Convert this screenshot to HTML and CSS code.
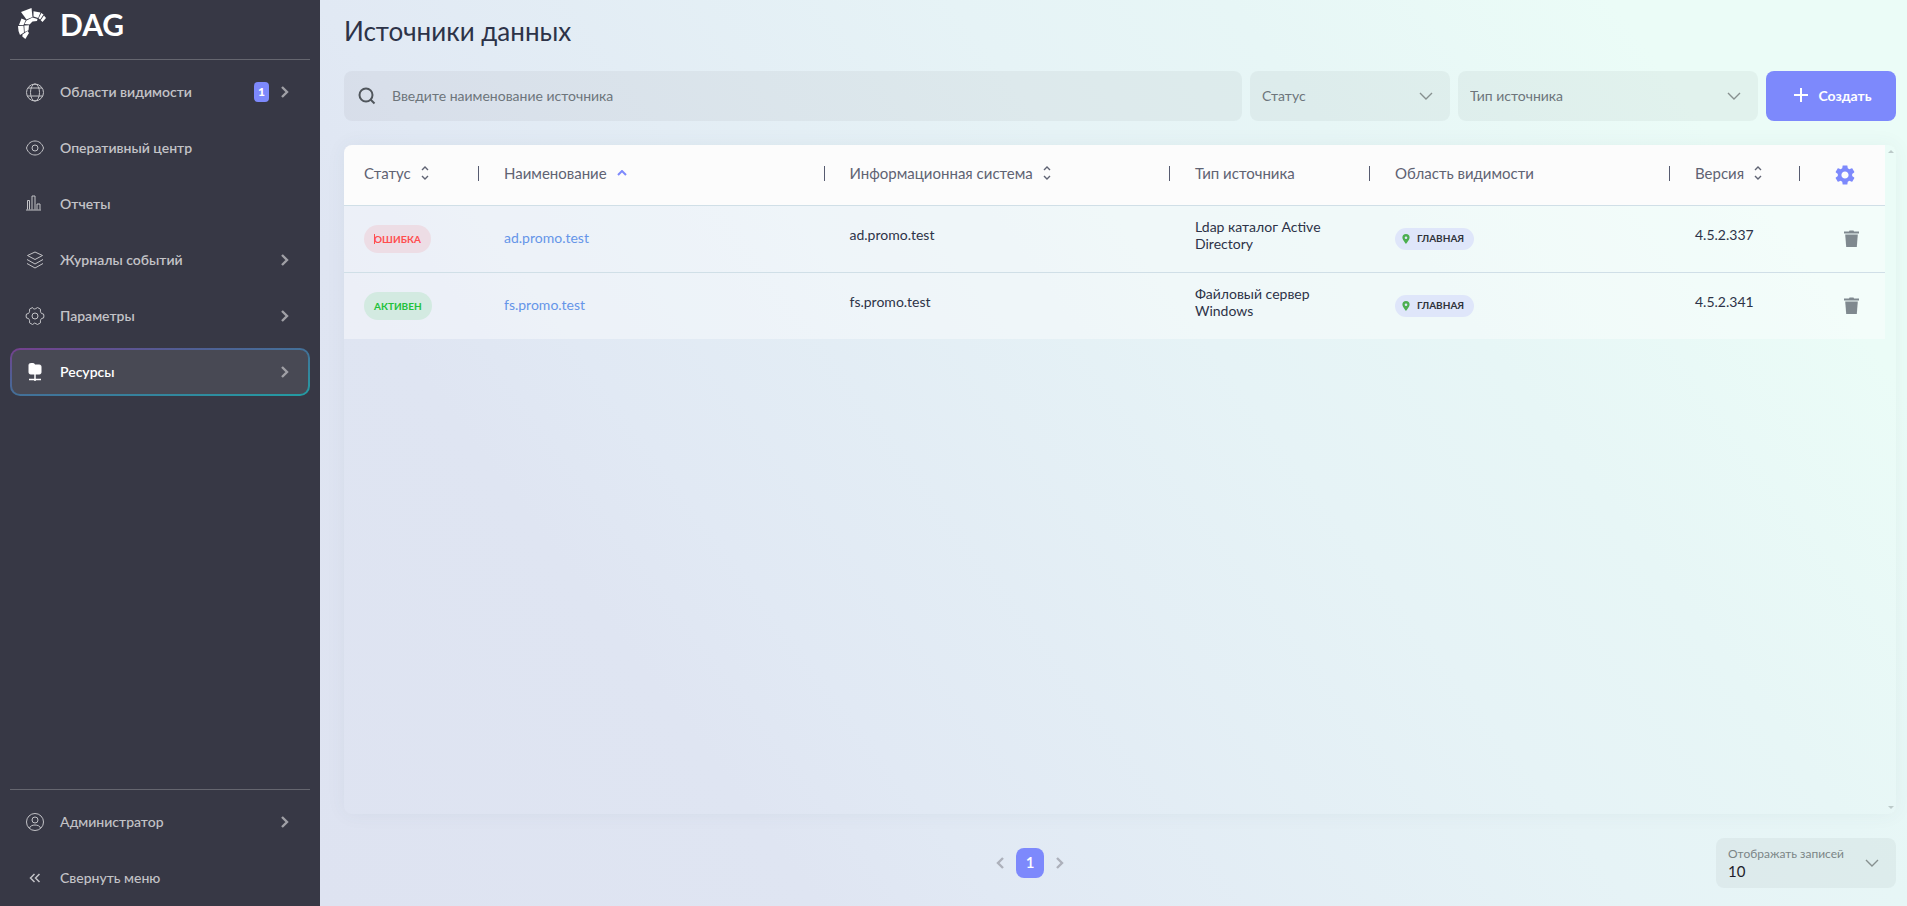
FILE: index.html
```
<!DOCTYPE html>
<html lang="ru">
<head>
    <meta charset="UTF-8">
    <meta name="viewport" content="width=device-width, initial-scale=1.0">
    <title>DAG - Источники данных</title>
    <link rel="stylesheet" href="styles.css">
</head>
<body>

    <!-- Общие иконки -->
    <svg class="sprite" aria-hidden="true">
        <symbol id="chevron" viewBox="0 0 8 12"><path d="M1 1l5 5-5 5" fill="none" stroke="currentColor" stroke-width="2.4"/></symbol>
        <symbol id="arrow-down" viewBox="0 0 14 8"><path d="M1 1l6 6 6-6" fill="none" stroke="currentColor" stroke-width="1.4"/></symbol>
        <symbol id="sort" viewBox="0 0 8 14"><path d="M1 4l3-3 3 3M1 10l3 3 3-3" fill="none" stroke="currentColor" stroke-width="1.4"/></symbol>
        <symbol id="pin" viewBox="0 0 8 10"><path fill-rule="evenodd" d="M4 0a3.6 3.6 0 0 0-3.6 3.6C.4 6 4 10 4 10s3.6-4 3.6-6.4A3.6 3.6 0 0 0 4 0zm0 5a1.3 1.3 0 1 1 0-2.6A1.3 1.3 0 0 1 4 5z"/></symbol>
        <symbol id="trash" viewBox="0 0 15 18"><path d="M0 1.5h5L5.5.5h4l.5 1h5v2H0z"/><path d="M1.2 4.5h12.600l-1 12.500H2.200z"/></symbol>
    </svg>

    <div class="layout">
        <aside class="sidebar">
            <div class="logo">
                <svg width="28" height="32" viewBox="0 0 28 32" fill="#fff">
                    <path d="M3 4L13.500 0l1 9-6 2.500z"/>
                    <path d="M15.500 3.200l7 1.300-2.300 5.500-4.700-1.500z"/>
                    <path d="M23.300 5l2.200 1.500-3.300 5-1.600-.9z"/>
                    <path d="M26 7.500l2 2.500-3.500 4-1.800-1.800z"/>
                    <path d="M3.500 10.500l4.200 1.800L5.500 17H1z"/>
                    <path d="M8.500 12.500l6-3 5 1.500-.5 2-4.500.5-3 3-5-.5z"/>
                    <path d="M0 18l5.500-.2.500 6.700-4 2.500Q0 23 0 18z"/>
                    <path d="M6.300 17.500l4.700-.2-.5 5-3.800 1.700z"/>
                    <path d="M4.500 26.500l5-3.500 1.500 2-3.700 6-3-2.500z"/>
                </svg>
                <span>DAG</span>
            </div>
            <nav class="menu">
                <a href="#" class="menu-item">
                    <svg width="20" height="20" viewBox="0 0 20 20"><circle cx="10" cy="10.500" r="8.500"/><ellipse cx="10" cy="10.500" rx="4.500" ry="8.500"/><path d="M3 6h14M2 14h16"/></svg>
                    <span>Области видимости</span>
                    <b class="badge">1</b>
                    <svg class="chevron"><use href="#chevron"/></svg>
                </a>
                <a href="#" class="menu-item">
                    <svg width="20" height="20" viewBox="0 0 20 20"><path d="M1.500 10C3 5 6.500 3 10 3s7 2 8.500 7c-1.500 5-5 7-8.500 7s-7-2-8.500-7z"/><circle cx="10" cy="10" r="3"/></svg>
                    <span>Оперативный центр</span>
                </a>
                <a href="#" class="menu-item">
                    <svg width="20" height="20" viewBox="0 0 20 20"><path d="M1 16h15M2.500 15.500V6.500h2v9M7 15.500V2h3v13.500M12 15.500V10h3v5.500"/></svg>
                    <span>Отчеты</span>
                </a>
                <a href="#" class="menu-item">
                    <svg width="20" height="20" viewBox="0 0 20 20"><path d="M10 2l7.500 3.500L10 9.500 2.500 5.500zM2 9.500l8 4.500 8-4.500M2 13.500l8 4.500 8-4.500"/></svg>
                    <span>Журналы событий</span>
                    <svg class="chevron"><use href="#chevron"/></svg>
                </a>
                <a href="#" class="menu-item">
                    <svg width="20" height="20" viewBox="0 0 20 20"><path d="M7.500 1.500q1.200 3 5 0l3 1.700q-.8 4.600 3 4.800.9 2 0 4-3.800.2-3 4.800l-3 1.700q-3-3-5 0l-3-1.700q.8-4.600-3-4.800-.9-2 0-4 3.800-.2 3-4.800z"/><circle cx="10" cy="10" r="3"/></svg>
                    <span>Параметры</span>
                    <svg class="chevron"><use href="#chevron"/></svg>
                </a>
                <a href="#" class="menu-item active">
                    <svg width="20" height="20" viewBox="0 0 20 20"><path class="fill" d="M4 3q0-1.500 1.500-1.500h3L10.500 3h4Q16 3 16 4.500v6q0 1.500-1.500 1.500h-9Q4 12 4 10.500z"/><path d="M10 12v7M4 17.500h12" stroke-width="1.500"/></svg>
                    <span>Ресурсы</span>
                    <svg class="chevron"><use href="#chevron"/></svg>
                </a>
            </nav>
            <nav class="menu menu-bottom">
                <a href="#" class="menu-item">
                    <svg width="20" height="20" viewBox="0 0 20 20"><circle cx="10" cy="10" r="8.500"/><circle cx="10" cy="8" r="3"/><path d="M4.500 16c1-4 10-4 11 0"/></svg>
                    <span>Администратор</span>
                    <svg class="chevron"><use href="#chevron"/></svg>
                </a>
                <button type="button" class="menu-item">
                    <svg width="20" height="20" viewBox="0 0 20 20"><path d="M9.500 6l-4 4 4 4M14.500 6l-4 4 4 4" stroke-width="1.500"/></svg>
                    <span>Свернуть меню</span>
                </button>
            </nav>
        </aside>

        <main class="content">
            <h1>Источники данных</h1>

            <form class="filters">
                <div class="search">
                    <svg width="18" height="18" viewBox="0 0 18 18" fill="none" stroke="#50565c" stroke-width="2"><circle cx="8" cy="8" r="6.500"/><path d="M12.500 12.500l4 4"/></svg>
                    <input type="text" aria-label="Поиск" placeholder="Введите наименование источника">
                </div>
                <div class="select select-status">
                    <select aria-label="Статус"><option>Статус</option></select>
                    <svg><use href="#arrow-down"/></svg>
                </div>
                <div class="select select-type">
                    <select aria-label="Тип источника"><option>Тип источника</option></select>
                    <svg><use href="#arrow-down"/></svg>
                </div>
                <button type="button" class="create">
                    <svg width="14" height="14" viewBox="0 0 14 14" stroke="#fff" stroke-width="2"><path d="M7 0v14M0 7h14"/></svg>
                    Создать
                </button>
            </form>

            <div class="table-box">
                <table>
                    <colgroup>
                        <col class="col-status">
                        <col>
                        <col>
                        <col class="col-type">
                        <col class="col-scope">
                        <col class="col-version">
                        <col class="col-actions">
                    </colgroup>
                    <thead>
                        <tr>
                            <th><div>Статус <svg class="sort"><use href="#sort"/></svg></div></th>
                            <th><div>Наименование <svg class="sort-asc" viewBox="0 0 10 6"><path d="M1 5l4-4 4 4"/></svg></div></th>
                            <th><div>Информационная система <svg class="sort"><use href="#sort"/></svg></div></th>
                            <th><div>Тип источника</div></th>
                            <th><div>Область видимости</div></th>
                            <th><div>Версия <svg class="sort"><use href="#sort"/></svg></div></th>
                            <th class="actions">
                                <button type="button" aria-label="Настройки">
                                    <svg width="24" height="24" viewBox="0 0 24 24" fill="#7d89fc"><path d="M19.140 12.940c.04-.3.060-.61.060-.94 0-.32-.02-.64-.07-.94l2.030-1.580c.18-.14.23-.41.12-.61l-1.920-3.320c-.12-.22-.37-.29-.59-.22l-2.390.96c-.5-.38-1.030-.7-1.620-.94l-.36-2.540c-.04-.24-.24-.41-.48-.41h-3.840c-.24 0-.43.17-.47.41l-.36 2.540c-.59.24-1.130.57-1.620.94l-2.390-.96c-.22-.08-.47 0-.59.22L2.740 8.870c-.12.21-.08.47.12.61l2.030 1.580c-.05.3-.09.63-.09.94s.02.64.07.94l-2.030 1.580c-.18.14-.23.41-.12.61l1.920 3.320c.12.22.37.29.59.22l2.390-.96c.5.38 1.030.7 1.620.94l.36 2.540c.05.24.24.41.48.41h3.840c.24 0 .44-.17.47-.41l.36-2.540c.59-.24 1.130-.56 1.620-.94l2.390.96c.22.08.47 0 .59-.22l1.920-3.320c.12-.22.070-.47-.12-.61l-2.010-1.580zM12 15.600c-1.980 0-3.600-1.620-3.600-3.600s1.620-3.600 3.600-3.600 3.600 1.620 3.600 3.600-1.620 3.600-3.600 3.600z"/></svg>
                                </button>
                            </th>
                        </tr>
                    </thead>
                    <tbody>
                        <tr>
                            <td><span class="status error">ОШИБКА</span></td>
                            <td><a href="#">ad.promo.test</a></td>
                            <td><p>ad.promo.test</p></td>
                            <td><p>Ldap каталог Active Directory</p></td>
                            <td><span class="scope"><svg><use href="#pin"/></svg>ГЛАВНАЯ</span></td>
                            <td><p>4.5.2.337</p></td>
                            <td class="actions"><button type="button" class="delete" aria-label="Удалить"><svg><use href="#trash"/></svg></button></td>
                        </tr>
                        <tr>
                            <td><span class="status ok">АКТИВЕН</span></td>
                            <td><a href="#">fs.promo.test</a></td>
                            <td><p>fs.promo.test</p></td>
                            <td><p>Файловый сервер Windows</p></td>
                            <td><span class="scope"><svg><use href="#pin"/></svg>ГЛАВНАЯ</span></td>
                            <td><p>4.5.2.341</p></td>
                            <td class="actions"><button type="button" class="delete" aria-label="Удалить"><svg><use href="#trash"/></svg></button></td>
                        </tr>
                    </tbody>
                </table>
                <div class="scrollbar"><i class="up"></i><i class="down"></i></div>
            </div>

            <footer class="footer">
                <nav class="pages">
                    <button type="button" aria-label="Назад"><svg class="chevron back"><use href="#chevron"/></svg></button>
                    <button type="button" class="current">1</button>
                    <button type="button" aria-label="Вперед"><svg class="chevron"><use href="#chevron"/></svg></button>
                </nav>
                <div class="select per-page">
                    <label for="perPage">Отображать записей</label>
                    <select id="perPage"><option>10</option></select>
                    <svg><use href="#arrow-down"/></svg>
                </div>
            </footer>
        </main>
    </div>

</body>
</html>
```

FILE: styles.css
```
* {
    box-sizing: border-box;
}

body {
    margin: 0;
    font-family: Lato, "Open Sans", sans-serif;
    font-size: 14px;
    color: #2d3348;
}

button, input, select {
    font-family: inherit;
    border: none;
    background: none;
    padding: 0;
    margin: 0;
}

button {
    cursor: pointer;
}

.sprite {
    display: none;
}

.layout {
    display: flex;
    min-height: 100vh;
}

/* Боковое меню */
.sidebar {
    width: 320px;
    flex-shrink: 0;
    padding: 0 10px 4px;
    background-color: #373845;
    display: flex;
    flex-direction: column;
}

.logo {
    height: 60px;
    padding: 0 8px 12px;
    display: flex;
    align-items: center;
    gap: 14px;
    border-bottom: 1px solid #65666f;
    color: #fff;
    font-size: 30px;
    font-weight: 700;
}

.menu {
    display: flex;
    flex-direction: column;
    gap: 8px;
    padding-top: 8px;
}

.menu-bottom {
    margin-top: auto;
    border-top: 1px solid #65666f;
}

.menu-item {
    height: 48px;
    padding: 0 21px 0 15px;
    display: flex;
    align-items: center;
    border-radius: 10px;
    color: #c3c3c7;
    font-size: 14px;
    font-weight: 600;
    text-align: left;
    text-decoration: none;
}

.menu-bottom .menu-item {
    font-weight: 500;
}

.menu-item span {
    flex: 1;
    margin-left: 15px;
    padding-bottom: 2px;
}

.menu-item svg {
    fill: none;
    stroke: currentColor;
}

.menu-item .fill {
    fill: #fff;
}

.menu-item.active {
    color: #fff;
    border: 2px solid transparent;
    padding: 0 19px 0 13px;
    background: linear-gradient(#484954, #484954) padding-box,
                linear-gradient(to bottom right, #763f8e, #515e94 30%, #229da3) border-box;
}

.badge {
    width: 15px;
    height: 20px;
    margin-right: 12px;
    border-radius: 4px;
    background-color: #7d89fc;
    color: #fff;
    font-size: 12px;
    line-height: 20px;
    text-align: center;
}

.chevron {
    width: 8px;
    height: 12px;
    color: #a0a0a6;
}

.menu-item .chevron {
    stroke: none;
}

/* Основная часть */
.content {
    flex: 1;
    min-width: 0;
    padding: 0 11px 18px 24px;
    display: flex;
    flex-direction: column;
    background: linear-gradient(53deg, #dee3f1 0%, #dfe5f2 22%, #e1e9f4 30%, #e6f3f6 58%, #e7f6f6 70%, #ebfcf7 87%);
}

h1 {
    margin: 0;
    height: 71px;
    padding-top: 14px;
    font-size: 26px;
    line-height: 34px;
    font-weight: 400;
}

.filters {
    display: flex;
    gap: 8px;
}

.search, .select {
    height: 50px;
    border-radius: 8px;
    background-color: rgba(0, 0, 0, 0.04);
    display: flex;
    align-items: center;
}

.search {
    flex: 1;
    padding-left: 14px;
    gap: 16px;
}

.search input {
    flex: 1;
    height: 50px;
    padding-bottom: 2px;
    font-size: 14px;
}

.search input::placeholder {
    color: #6d757b;
}

.select {
    position: relative;
}

.select select {
    appearance: none;
    width: 100%;
    height: 50px;
    padding: 0 40px 2px 12px;
    color: #6d757b;
    font-size: 14px;
}

.select svg {
    position: absolute;
    right: 17px;
    top: 21px;
    width: 14px;
    height: 8px;
    color: #87908f;
    pointer-events: none;
}

.select-status {
    width: 200px;
}

.select-type {
    width: 300px;
}

.create {
    width: 130px;
    height: 50px;
    padding: 0 0 2px 4px;
    border-radius: 8px;
    background-color: #7d89fc;
    color: #fff;
    font-size: 14px;
    font-weight: 700;
    display: flex;
    align-items: center;
    justify-content: center;
    gap: 10px;
}

/* Таблица */
.table-box {
    flex: 1;
    margin-top: 24px;
    display: flex;
    align-items: flex-start;
    border-radius: 8px;
    overflow: hidden;
    box-shadow: 0 0 20px rgba(60, 80, 110, 0.06);
}

table {
    flex: 1;
    border-collapse: collapse;
    table-layout: fixed;
    width: 100%;
}

.col-status {
    width: 140px;
}

.col-type {
    width: 200px;
}

.col-scope {
    width: 300px;
}

.col-version {
    width: 130px;
}

.col-actions {
    width: 80px;
}

th {
    height: 60px;
    padding: 0 5px 3px 20px;
    background-color: #fcfcfc;
    color: #5f6373;
    font-size: 15px;
    font-weight: 400;
    text-align: left;
}

th div {
    height: 15px;
    display: flex;
    align-items: center;
    gap: 10px;
    border-right: 1px solid #565b70;
}

.sort {
    width: 8px;
    height: 14px;
}

.sort-asc {
    width: 10px;
    height: 6px;
    fill: none;
    stroke: #7d89fc;
    stroke-width: 2;
}

td {
    height: 67px;
    padding: 0 20px;
    border-top: 1px solid #d0dfe7;
    background-color: rgba(255, 255, 255, 0.4);
    font-size: 14px;
    line-height: 17px;
}

td p {
    margin: 0 0 8px;
}

td a {
    display: block;
    margin-bottom: 2px;
    color: #6595e8;
    text-decoration: none;
}

.status {
    position: relative;
    display: inline-block;
    height: 28px;
    padding: 0 10px;
    border-radius: 14px;
    font-size: 10px;
    line-height: 28px;
    font-weight: 700;
}

.error {
    background-color: #eddde5;
    color: #ff4d4f;
}

.error::before {
    content: "";
    position: absolute;
    left: 10px;
    top: 9px;
    width: 1px;
    height: 10px;
    background-color: #ff4d4f;
}

.ok {
    background-color: #d3eae1;
    color: #22c13a;
}

.scope {
    display: inline-flex;
    align-items: center;
    height: 22px;
    padding: 0 10px 0 7px;
    gap: 7px;
    border-radius: 11px;
    background-color: #dfe6fa;
    color: #30333b;
    font-size: 10px;
    font-weight: 700;
}

.scope svg {
    width: 8px;
    height: 10px;
    fill: #4caf50;
}

.actions {
    padding: 0;
    text-align: center;
}

.actions button {
    display: block;
    margin: 4px auto 0;
}

.actions .delete {
    margin: 0 0 0 39px;
}

.delete svg {
    display: block;
    width: 15px;
    height: 18px;
    fill: #7f898f;
}

.scrollbar {
    width: 11px;
    align-self: stretch;
    padding: 5px 3px;
    display: flex;
    flex-direction: column;
    justify-content: space-between;
}

.scrollbar i {
    border: 3px solid transparent;
}

.scrollbar .up {
    border-top: none;
    border-bottom-color: #bccac9;
}

.scrollbar .down {
    border-bottom: none;
    border-top-color: #bccac9;
}

/* Нижняя панель */
.footer {
    display: flex;
    align-items: center;
    margin-top: 24px;
}

.pages {
    flex: 1;
    display: flex;
    align-items: center;
    justify-content: center;
    gap: 12px;
}

.pages .chevron {
    display: block;
    color: #adb1bb;
}

.back {
    transform: rotate(180deg);
}

.current {
    width: 28px;
    height: 30px;
    padding-bottom: 2px;
    border-radius: 8px;
    background-color: #7d89fc;
    color: #fff;
    font-size: 15px;
    font-weight: 600;
}

.per-page {
    width: 180px;
    flex-direction: column;
    align-items: flex-start;
    padding: 9px 12px 0;
}

.per-page label {
    color: #7b8586;
    font-size: 12px;
    line-height: 14px;
}

.per-page select {
    height: 20px;
    padding: 0;
    color: #1d1d2b;
    font-size: 15px;
}
```
